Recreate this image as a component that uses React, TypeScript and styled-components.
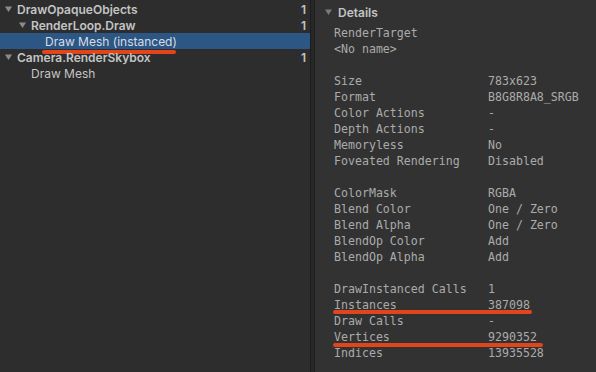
import React from 'react';
import styled, {createGlobalStyle} from 'styled-components';

const GlobalStyle = createGlobalStyle`
  html, body {
    margin: 0;
    padding: 0;
    background: #2d2d2d;
  }
  #root {
    height: 372px;
  }
`;

const Window = styled.div`
  display: flex;
  width: 596px;
  height: 372px;
  overflow: hidden;
  font-family: Inter, "Noto Sans", sans-serif;
`;

const TreePanel = styled.div`
  width: 310px;
  flex-shrink: 0;
  background: #2d2d2d;
  padding-top: 1px;
  box-sizing: border-box;
`;

const Splitter = styled.div`
  width: 5px;
  flex-shrink: 0;
  box-sizing: border-box;
  background: #282828;
  border-left: 1px solid #1c1c1c;
  border-right: 1px solid #1f1f1f;
`;

const DetailsPanel = styled.div`
  flex: 1;
  background: #323232;
  padding-top: 4px;
`;

const Row = styled.div<{ $depth: number; $selected?: boolean }>`
  position: relative;
  display: flex;
  align-items: center;
  height: 16px;
  padding-left: ${p => 5 + p.$depth * 14}px;
  padding-right: 4px;
  background: ${p => (p.$selected ? '#2c5684' : 'transparent')};
  color: ${p => (p.$selected ? '#d6dde6' : '#c4c4c4')};
  font-size: 12px;
`;

const Toggle = styled.span`
  width: 12px;
  height: 16px;
  flex-shrink: 0;
  display: flex;
  align-items: center;

  > svg {
    display: block;
  }
`;

const Label = styled.span<{ $bold?: boolean }>`
  flex: 1;
  font-weight: ${p => (p.$bold ? 600 : 400)};
  white-space: nowrap;
`;

const Count = styled.span`
  font-weight: 600;
  color: #c4c4c4;
`;

const Mark = styled.span<{ $left: number; $top: number; $width: number; $height?: number }>`
  position: absolute;
  left: ${p => p.$left}px;
  top: ${p => p.$top}px;
  width: ${p => p.$width}px;
  height: ${p => p.$height ?? 4}px;
  border-radius: 2px;
  background: #e2441c;
  pointer-events: none;
`;

const Header = styled.div`
  display: flex;
  align-items: center;
  height: 16px;
  padding-left: 10px;
  color: #c4c4c4;
  font-size: 12px;
  font-weight: 600;

  > svg {
    margin-right: 6px;
  }
`;

const PropList = styled.div`
  margin-top: 5px;
  padding-left: 19px;
  font-family: "DejaVu Sans Mono", "Liberation Mono", monospace;
  font-size: 11.6px;
  color: #ababab;
`;

const PropRow = styled.div`
  position: relative;
  display: grid;
  grid-template-columns: 154px 1fr;
  height: 16px;
  line-height: 16px;
  white-space: pre;
`;

const Gap = styled.div`
  height: 16px;
`;

function Arrow({color = '#8c8c8c'}: { color?: string }) {
  return (
    <svg width="7" height="6" viewBox="0 0 7 6">
      <path d="M0 0.5 H7 L3.5 6 Z" fill={color}/>
    </svg>
  );
}

type Node = {
  label: string;
  depth: number;
  count?: number;
  open?: boolean;
  selected?: boolean;
  mark?: { left: number; width: number };
};

const nodes: Node[] = [
  {label: 'DrawOpaqueObjects', depth: 0, count: 1, open: true},
  {label: 'RenderLoop.Draw', depth: 1, count: 1, open: true},
  {label: 'Draw Mesh (instanced)', depth: 2, selected: true, mark: {left: 42, width: 134}},
  {label: 'Camera.RenderSkybox', depth: 0, count: 1, open: true},
  {label: 'Draw Mesh', depth: 1},
];

type Prop = [string, string?] | null;

const props: { key: string; value?: string; mark?: { top: number; width: number } }[] = [
  {key: 'RenderTarget'},
  {key: '<No name>'},
  {key: ''},
  {key: 'Size', value: '783x623'},
  {key: 'Format', value: 'B8G8R8A8_SRGB'},
  {key: 'Color Actions', value: '-'},
  {key: 'Depth Actions', value: '-'},
  {key: 'Memoryless', value: 'No'},
  {key: 'Foveated Rendering', value: 'Disabled'},
  {key: ''},
  {key: 'ColorMask', value: 'RGBA'},
  {key: 'Blend Color', value: 'One / Zero'},
  {key: 'Blend Alpha', value: 'One / Zero'},
  {key: 'BlendOp Color', value: 'Add'},
  {key: 'BlendOp Alpha', value: 'Add'},
  {key: ''},
  {key: 'DrawInstanced Calls', value: '1'},
  {key: 'Instances', value: '387098', mark: {top: 13, width: 199}},
  {key: 'Draw Calls', value: '-'},
  {key: 'Vertices', value: '9290352', mark: {top: 14, width: 210}},
  {key: 'Indices', value: '13935528'},
];

export default function App() {
  return (
    <>
      <GlobalStyle/>
      <Window>
        <TreePanel>
          {nodes.map((n, i) => (
            <Row key={i} $depth={n.depth} $selected={n.selected}>
              <Toggle>{n.open && <Arrow/>}</Toggle>
              <Label $bold={n.count !== undefined}>{n.label}</Label>
              {n.count !== undefined && <Count>{n.count}</Count>}
              {n.mark && <Mark $left={n.mark.left} $top={17} $width={n.mark.width}/>}
            </Row>
          ))}
        </TreePanel>
        <Splitter/>
        <DetailsPanel>
          <Header>
            <Arrow color="#7a7a7a"/>
            Details
          </Header>
          <PropList>
            {props.map((p, i) =>
              p.key === '' ? (
                <Gap key={i}/>
              ) : (
                <PropRow key={i}>
                  <span>{p.key}</span>
                  <span>{p.value ?? ''}</span>
                  {p.mark && <Mark $left={-1} $top={p.mark.top} $width={p.mark.width}/>}
                </PropRow>
              )
            )}
          </PropList>
        </DetailsPanel>
      </Window>
    </>
  );
}
